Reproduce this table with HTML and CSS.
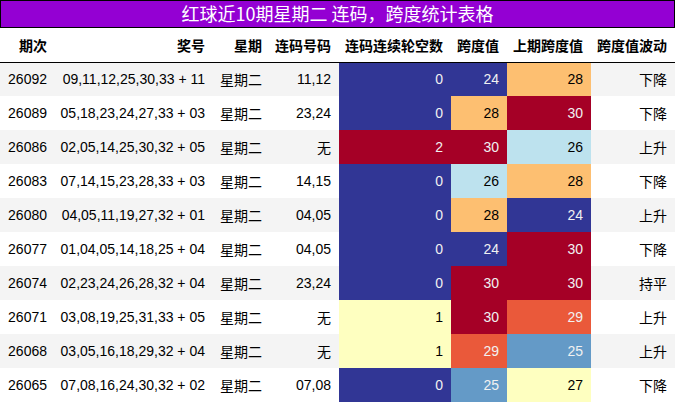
FILE: index.html
```html
<!DOCTYPE html>
<html lang="zh">
<head>
<meta charset="utf-8">
<title>红球近10期星期二 连码，跨度统计表格</title>
<link rel="stylesheet" href="styles.css">
</head>
<body>
<div class="wrap">
  <div class="title">红球近10期星期二 连码，跨度统计表格</div>
  <table class="stats">
    <colgroup>
      <col class="w1"><col class="w2"><col class="w3"><col class="w4"><col class="w5"><col class="w6"><col class="w7"><col class="w8">
    </colgroup>
    <thead>
      <tr><th>期次</th><th>奖号</th><th>星期</th><th>连码号码</th><th>连码连续轮空数</th><th>跨度值</th><th>上期跨度值</th><th>跨度值波动</th></tr>
    </thead>
    <tbody>
      <tr><td>26092</td><td>09,11,12,25,30,33 + 11</td><td>星期二</td><td>11,12</td><td class="h0">0</td><td class="h0">24</td><td class="h4">28</td><td>下降</td></tr>
      <tr><td>26089</td><td>05,18,23,24,27,33 + 03</td><td>星期二</td><td>23,24</td><td class="h0">0</td><td class="h4">28</td><td class="h6">30</td><td>下降</td></tr>
      <tr><td>26086</td><td>02,05,14,25,30,32 + 05</td><td>星期二</td><td>无</td><td class="h6">2</td><td class="h6">30</td><td class="h2">26</td><td>上升</td></tr>
      <tr><td>26083</td><td>07,14,15,23,28,33 + 03</td><td>星期二</td><td>14,15</td><td class="h0">0</td><td class="h2">26</td><td class="h4">28</td><td>下降</td></tr>
      <tr><td>26080</td><td>04,05,11,19,27,32 + 01</td><td>星期二</td><td>04,05</td><td class="h0">0</td><td class="h4">28</td><td class="h0">24</td><td>上升</td></tr>
      <tr><td>26077</td><td>01,04,05,14,18,25 + 04</td><td>星期二</td><td>04,05</td><td class="h0">0</td><td class="h0">24</td><td class="h6">30</td><td>下降</td></tr>
      <tr><td>26074</td><td>02,23,24,26,28,32 + 04</td><td>星期二</td><td>23,24</td><td class="h0">0</td><td class="h6">30</td><td class="h6">30</td><td>持平</td></tr>
      <tr><td>26071</td><td>03,08,19,25,31,33 + 05</td><td>星期二</td><td>无</td><td class="h3">1</td><td class="h6">30</td><td class="h5">29</td><td>上升</td></tr>
      <tr><td>26068</td><td>03,05,16,18,29,32 + 04</td><td>星期二</td><td>无</td><td class="h3">1</td><td class="h5">29</td><td class="h1">25</td><td>上升</td></tr>
      <tr><td>26065</td><td>07,08,16,24,30,32 + 02</td><td>星期二</td><td>07,08</td><td class="h0">0</td><td class="h1">25</td><td class="h3">27</td><td>下降</td></tr>
    </tbody>
  </table>
</div>
</body>
</html>
```

FILE: styles.css
```css
html, body {
  margin: 0;
  padding: 0;
  background: #ffffff;
}

.wrap {
  width: 675px;
  font-family: "Liberation Sans", "Noto Sans CJK SC", sans-serif;
  font-size: 14px;
  color: #000000;
}

.title {
  box-sizing: border-box;
  height: 28px;
  border: 1px solid #000000;
  background: #9400d3;
  color: #ffffff;
  font-family: "Noto Sans CJK SC", sans-serif;
  font-size: 18px;
  line-height: 25px;
  text-align: center;
}

.stats {
  width: 675px;
  border-collapse: collapse;
  table-layout: fixed;
}

.w1 { width: 55px; }
.w2 { width: 158px; }
.w3 { width: 57px; }
.w4 { width: 69px; }
.w5 { width: 112px; }
.w6 { width: 56px; }
.w7 { width: 84px; }
.w8 { width: 84px; }

.stats th {
  height: 34px;
  padding: 0 8px 0 0;
  text-align: right;
  font-weight: bold;
  font-family: "Noto Sans CJK SC", sans-serif;
  font-size: 14px;
  border-bottom: 1px solid #000000;
  white-space: nowrap;
  box-sizing: border-box;
}

.stats td {
  height: 34px;
  padding: 0 8px 0 0;
  text-align: right;
  white-space: nowrap;
  box-sizing: border-box;
}

.stats tbody tr:nth-child(odd) {
  background: #f4f4f4;
}

.stats tbody tr:nth-child(even) {
  background: #ffffff;
}

.stats td.h0 { background: #313695; color: #f1f1f1; }
.stats td.h1 { background: #649ac7; color: #f1f1f1; }
.stats td.h2 { background: #bde2ee; color: #000000; }
.stats td.h3 { background: #feffc0; color: #000000; }
.stats td.h4 { background: #fdbf71; color: #000000; }
.stats td.h5 { background: #ea593a; color: #f1f1f1; }
.stats td.h6 { background: #a50026; color: #f1f1f1; }
```
